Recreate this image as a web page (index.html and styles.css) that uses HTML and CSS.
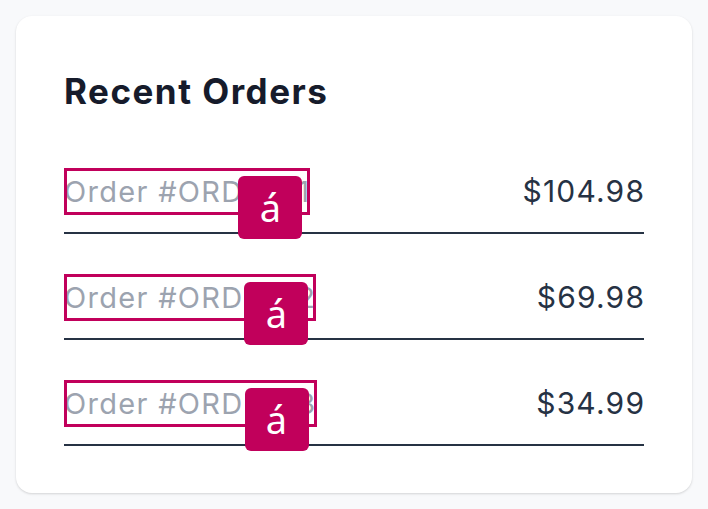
FILE: index.html
```html
<!DOCTYPE html>
<html lang="en">
<head>
  <meta charset="UTF-8" />
  <title>Recent Orders</title>
  <link rel="stylesheet" href="styles.css">
</head>
<body>
  <main class="card">
    <h2 class="card-title">Recent Orders</h2>
    <ul class="orders">
      <li class="order-row">
        <span class="order-id">Order #ORD-001<span class="mark">á</span></span>
        <span class="order-total">$104.98</span>
      </li>
      <li class="order-row">
        <span class="order-id">Order #ORD-002<span class="mark">á</span></span>
        <span class="order-total">$69.98</span>
      </li>
      <li class="order-row">
        <span class="order-id">Order #ORD-003<span class="mark">á</span></span>
        <span class="order-total">$34.99</span>
      </li>
    </ul>
  </main>
</body>
</html>
```

FILE: styles.css
```css
* {
  box-sizing: border-box;
}
body {
  margin: 0;
  padding: 16px;
  background: #f8f9fb;
  font-family: Inter, "Liberation Sans", sans-serif;
}
.card {
  background: #fff;
  border-radius: 16px;
  box-shadow: 0 1px 3px rgba(0,0,0,0.1), 0 1px 2px rgba(0,0,0,0.06);
  padding: 48px;
  height: 477px;
}
.card-title {
  margin: 0 0 33px 0;
  font-size: 35px;
  line-height: 55px;
  font-weight: 700;
  letter-spacing: 1.5px;
  color: #161b2b;
}
.orders {
  list-style: none;
  margin: 0;
  padding: 0;
  display: flex;
  flex-direction: column;
  gap: 24px;
}
.order-row {
  display: flex;
  align-items: center;
  justify-content: space-between;
  padding: 16px 0 17px 0;
  border-bottom: 2px solid #263244;
}
.order-id {
  position: relative;
  font-size: 29px;
  line-height: 47px;
  letter-spacing: 1.3px;
  color: #9ca3af;
  outline: 3px solid #c1005b;
  outline-offset: -3px;
}
.order-total {
  font-size: 30px;
  line-height: 47px;
  letter-spacing: 1.2px;
  margin-right: -1.2px;
  color: #263244;
}
.mark {
  position: absolute;
  top: 8px;
  right: 8px;
  width: 64px;
  height: 63px;
  border-radius: 6px;
  background: #c1005b;
  color: #fff;
  font-family: "Noto Sans", sans-serif;
  font-size: 38px;
  letter-spacing: 0;
  display: flex;
  align-items: center;
  justify-content: center;
}
```
